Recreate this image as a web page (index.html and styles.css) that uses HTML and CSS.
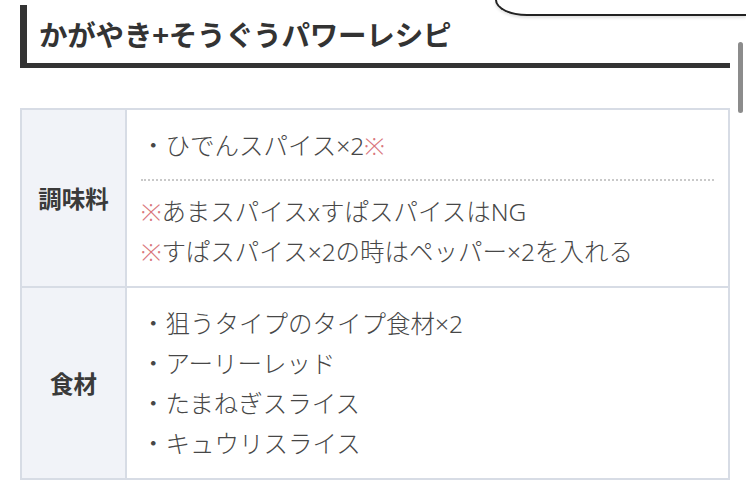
FILE: index.html
```html
<!DOCTYPE html>
<html lang="ja">
<head>
<meta charset="utf-8">
<link rel="stylesheet" href="styles.css">
</head>
<body>
<div class="topbox"></div>
<div class="scrollbar"></div>
<main class="content">
  <h2 class="heading">かがやき+そうぐうパワーレシピ</h2>
  <table class="recipe">
    <tr>
      <th>調味料</th>
      <td>
        <p>・ひでんスパイス×2<span class="mark">※</span></p>
        <hr class="dots">
        <p><span class="mark">※</span>あまスパイスxすぱスパイスはNG</p>
        <p><span class="mark">※</span>すぱスパイス×2の時はペッパー×2を入れる</p>
      </td>
    </tr>
    <tr>
      <th>食材</th>
      <td>
        <p>・狙うタイプのタイプ食材×2</p>
        <p>・アーリーレッド</p>
        <p>・たまねぎスライス</p>
        <p>・キュウリスライス</p>
      </td>
    </tr>
  </table>
</main>
</body>
</html>
```
FILE: styles.css
```css
html, body {
  margin: 0;
  padding: 0;
  background: #fff;
}
body {
  font-family: "Noto Sans", "Noto Sans CJK JP", sans-serif;
  color: #474747;
  width: 746px;
  height: 503px;
  overflow: hidden;
  position: relative;
}
.content {
  padding: 5px 16px 0 20px;
}
.heading {
  margin: 0;
  height: 58px;
  line-height: 58px;
  border-left: 7px solid #333;
  border-bottom: 5px solid #333;
  padding-left: 12px;
  font-size: 28.5px;
  font-weight: 700;
  color: #333;
  font-family: "Noto Sans CJK JP", sans-serif;
  letter-spacing: -0.2px;
}
.recipe {
  margin-top: 40px;
  width: 710px;
  border-collapse: collapse;
  border: 2px solid #d7dce5;
}
.recipe th {
  width: 103px;
  background: #f1f3f8;
  border: 2px solid #d7dce5;
  font-size: 23.5px;
  font-weight: 700;
  color: #3a3a3a;
  font-family: "Noto Sans CJK JP", sans-serif;
  padding: 0;
  text-align: center;
}
.recipe td {
  border: 2px solid #d7dce5;
  padding: 16px 14px 14px 14px;
  font-size: 24.5px;
  font-weight: 300;
  line-height: 40px;
  vertical-align: top;
}
.recipe p {
  margin: 0;
  white-space: nowrap;
}
.mark {
  color: #d9767b;
}
.dots {
  margin: 13px 0 11px;
  border: 0;
  border-top: 2px dotted #c9c9c9;
  height: 0;
}
.topbox {
  position: absolute;
  left: 495px;
  right: 0;
  top: 0;
  height: 14px;
  border: 2px solid #222;
  border-top: none;
  border-right: none;
  border-bottom-left-radius: 32px 16px;
  box-shadow: 0 2px 3px rgba(0, 0, 0, 0.12);
}
.scrollbar {
  position: absolute;
  left: 738px;
  top: 42px;
  width: 5px;
  height: 71px;
  border-radius: 3px;
  background: #8c8c8c;
}
```
